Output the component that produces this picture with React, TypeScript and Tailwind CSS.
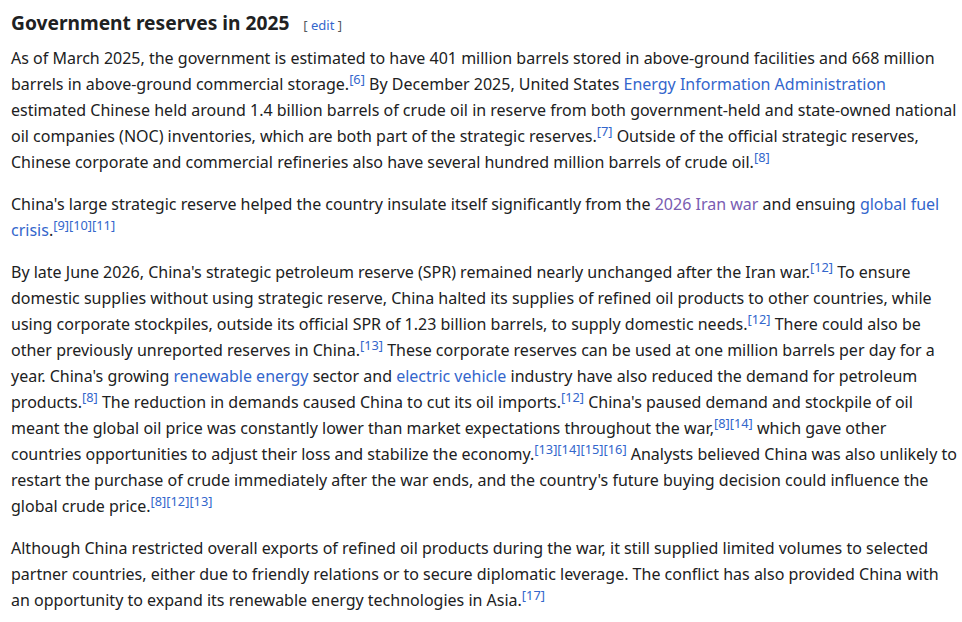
import React from "react";

const A = ({ children, visited }: { children: React.ReactNode; visited?: boolean }) => (
  <a href="#" className={visited ? "text-[#795cb2] no-underline" : "text-[#3366cc] no-underline"}>
    {children}
  </a>
);

const R = ({ n }: { n: number[] }) => (
  <sup className="text-[12.8px] leading-none whitespace-nowrap text-[#3366cc] static align-super">
    {n.map((x) => (
      <a key={x} href="#" className="text-[#3366cc] no-underline">[{x}]</a>
    ))}
  </sup>
);

export default function App() {
  return (
    <div
      className="bg-white text-[#202122] pl-[11px] pr-[4px] pt-[8px] w-[962px] h-[622px] overflow-hidden"
      style={{ fontFamily: '"Noto Sans", sans-serif' }}
    >
      <h3 className="text-[19.2px] font-bold leading-[30px] mb-[5px] flex items-baseline">
        <span>Government reserves in 2025</span>
        <span className="ml-[14px] text-[13px] font-normal text-[#54595d]">
          [ <A>edit</A> ]
        </span>
      </h3>
      <div className="text-[16px] leading-[26px] flex flex-col gap-[16px]">
        <p>
          As of March 2025, the government is estimated to have 401 million barrels stored in above-ground facilities and 668 million barrels in above-ground commercial storage.<R n={[6]} /> By December 2025, United States <A>Energy Information Administration</A> estimated Chinese held around 1.4 billion barrels of crude oil in reserve from both government-held and state-owned national oil companies (NOC) inventories, which are both part of the strategic reserves.<R n={[7]} /> Outside of the official strategic reserves, Chinese corporate and commercial refineries also have several hundred million barrels of crude oil.<R n={[8]} />
        </p>
        <p>
          China's large strategic reserve helped the country insulate itself significantly from the <A visited>2026 Iran war</A> and ensuing <A>global fuel crisis</A>.<R n={[9, 10, 11]} />
        </p>
        <p>
          By late June 2026, China's strategic petroleum reserve (SPR) remained nearly unchanged after the Iran war.<R n={[12]} /> To ensure domestic supplies without using strategic reserve, China halted its supplies of refined oil products to other countries, while using corporate stockpiles, outside its official SPR of 1.23 billion barrels, to supply domestic needs.<R n={[12]} /> There could also be other previously unreported reserves in China.<R n={[13]} /> These corporate reserves can be used at one million barrels per day for a year. China's growing <A>renewable energy</A> sector and <A>electric vehicle</A> industry have also reduced the demand for petroleum products.<R n={[8]} /> The reduction in demands caused China to cut its oil imports.<R n={[12]} /> China's paused demand and stockpile of oil meant the global oil price was constantly lower than market expectations throughout the war,<R n={[8, 14]} /> which gave other countries opportunities to adjust their loss and stabilize the economy.<R n={[13, 14, 15, 16]} /> Analysts believed China was also unlikely to restart the purchase of crude immediately after the war ends, and the country's future buying decision could influence the global crude price.<R n={[8, 12, 13]} />
        </p>
        <p>
          Although China restricted overall exports of refined oil products during the war, it still supplied limited volumes to selected partner countries, either due to friendly relations or to secure diplomatic leverage. The conflict has also provided China with an opportunity to expand its renewable energy technologies in Asia.<R n={[17]} />
        </p>
      </div>
    </div>
  );
}
